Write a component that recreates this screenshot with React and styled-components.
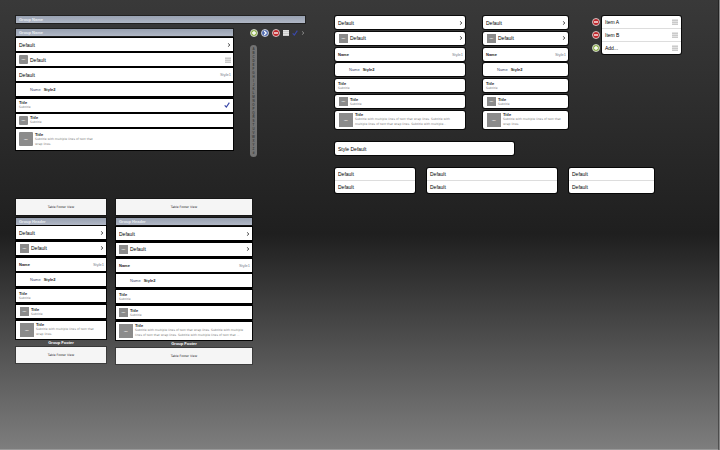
import React from "react";
import styled, { createGlobalStyle } from "styled-components";

const GlobalStyle = createGlobalStyle`
  * { box-sizing: border-box; }
  html { min-height: 100%; background: #7e7e7e; }
  body { margin: 0; font-family: "Liberation Sans", Arial, sans-serif; }
  ul { list-style: none; margin: 0; padding: 0; }
`;

const Page = styled.main`
  min-height: 100vh;
  padding: 16px;
  display: grid;
  grid-template-columns: 303fr 369fr;
  column-gap: 16px;
  align-items: start;
  background: linear-gradient(#393939 0%, #1f1f1f 52%, #7e7e7e 100%);
  border-right: 1px solid #858585;
  box-shadow: inset -1px 0 0 rgba(0, 0, 0, 0.35), inset 0 -1px 0 #999;
  padding-right: 15px;
`;

const PlainSection = styled.section`
  display: flex;
  flex-direction: column;
  padding-right: 14px;
`;

const GroupedSection = styled.section`
  display: flex;
  flex-direction: column;
  gap: 13px;
`;

const PlainBody = styled.div`
  display: grid;
  grid-template-columns: 217fr 55fr;
  column-gap: 17px;
  margin-top: 6px;
  align-items: start;
`;

const Tables = styled.div`
  display: grid;
  grid-template-columns: 90fr 136fr;
  column-gap: 10px;
  margin-top: 42px;
  padding-right: 53px;
`;

const GroupedLists = styled.div`
  display: grid;
  grid-template-columns: 130fr 85fr 118fr;
  column-gap: 18px;
  align-items: start;
`;

const PairLists = styled.div`
  display: grid;
  grid-template-columns: 80fr 130fr 85fr;
  column-gap: 12px;
  padding-right: 50px;
`;

const Column = styled.div`
  display: flex;
  flex-direction: column;
`;

const GroupHeader = styled.h2`
  margin: 0 0 ${(p) => p.$after || 0}px;
  padding-left: 3px;
  font-size: 4px;
  line-height: 7px;
  font-weight: bold;
  color: #eceef2;
  background: linear-gradient(#98a1b1, #b0b7c5);
  box-shadow: 0 0 0 1px rgba(0, 0, 0, 0.4);
`;

const List = styled.ul`
  display: flex;
  flex-direction: column;
  justify-content: space-between;
  min-height: ${(p) => (p.$rounded || p.$table ? 113 : 112)}px;
  background: ${(p) => (p.$rounded ? "none" : "#000")};
  box-shadow: ${(p) => (p.$rounded ? "none" : "0 0 0 1px rgba(0, 0, 0, 0.6)")};
`;

const Row = styled.li`
  display: flex;
  background: #fff;
  min-height: ${(p) => p.$height || 13}px;
  border-radius: ${(p) => (p.$rounded ? 2 : 0)}px;
  box-shadow: 0 0 0 1px rgba(0, 0, 0, 0.8);
`;

const RowBody = styled.div`
  flex: 1;
  min-width: 0;
  display: flex;
  align-items: center;
  gap: ${(p) => p.$gap || 2}px;
  padding: 0 ${(p) => p.$end || 2}px 0 ${(p) => p.$start || 3}px;
  border: 0;
  background: none;
  font-family: inherit;
  text-align: left;
  color: #111;
`;

const Label = styled.span`
  font-size: 5px;
  line-height: 6px;
  color: #000;
  white-space: nowrap;
`;

const SmallLabel = styled.span`
  font-size: 4px;
  line-height: 5px;
  font-weight: ${(p) => (p.$plain ? "normal" : "bold")};
  color: ${(p) => p.$color || "#222"};
  white-space: nowrap;
`;

const Stack = styled.span`
  display: flex;
  flex-direction: column;
  min-width: 0;
`;

const Subtitle = styled.span`
  font-family: "DejaVu Sans", sans-serif;
  font-size: 3px;
  line-height: 5px;
  color: #7c7c7c;
  white-space: nowrap;
`;

const Thumb = styled.span`
  flex: none;
  width: ${(p) => (p.$large ? 14 : 9)}px;
  height: ${(p) => (p.$large ? 14 : 9)}px;
  border-radius: ${(p) => (p.$square ? 0 : 1)}px;
  background: #8b8b8b;
  color: #eee;
  font-size: 2px;
  line-height: ${(p) => (p.$large ? 14 : 9)}px;
  font-weight: bold;
  text-align: center;
`;

const Trailing = styled.span`
  margin-left: auto;
  display: flex;
  align-items: center;
`;

const TableFooterView = styled.div`
  font-family: "DejaVu Sans", sans-serif;
  font-size: 3px;
  line-height: 16px;
  text-align: center;
  color: #222;
  background: #f5f5f5;
  box-shadow: 0 0 0 1px rgba(0, 0, 0, 0.3);
  margin-bottom: ${(p) => p.$after || 0}px;
`;

const GroupFooter = styled.p`
  margin: 0;
  font-size: 4px;
  line-height: 8px;
  font-weight: bold;
  text-align: center;
  color: #fff;
`;

const IconBar = styled.div`
  display: flex;
  align-items: center;
  justify-content: space-between;
  height: 8px;
`;

const IndexBar = styled.nav`
  width: 7px;
  margin-top: 8px;
  padding: 2px 0;
  display: flex;
  flex-direction: column;
  border-radius: 4px;
  background: #737373;
`;

const IndexLink = styled.a`
  font-size: 3px;
  line-height: 4px;
  font-weight: bold;
  text-align: center;
  text-decoration: none;
  color: #3c3c3c;
`;

const IconButton = styled.button`
  display: flex;
  align-items: center;
  justify-content: center;
  padding: 0;
  border: 0;
  background: none;
`;

const Card = styled.ul`
  flex: 1;
  background: #fff;
  border-radius: 2px;
  box-shadow: 0 0 0 1px rgba(0, 0, 0, 0.8);
`;

const CardRow = styled.li`
  display: flex;
  align-items: center;
  min-height: 12px;
  padding: 0 3px;
  & + & { border-top: 1px solid #ddd; min-height: 13px; }
`;

const SingleCard = styled(Card)`
  flex: none;
  width: 48.5%;
  ${CardRow} { min-height: 13px; }
`;

const Editor = styled.div`
  display: flex;
  gap: 2px;
  padding: 0 23px 0 6px;
`;

const EditorButtons = styled.div`
  display: flex;
  flex-direction: column;
  justify-content: space-around;
`;

const Svg = styled.svg`
  display: block;
  flex: none;
`;

const Round = ({ color, children }) => (
  <Svg width="8" height="8" viewBox="0 0 24 24" fill="none">
    <circle cx="12" cy="12" r="10.5" fill={color} stroke="#dcdcdc" strokeWidth="2.6" />
    {children}
  </Svg>
);
const Plus = () => (
  <Round color="#8fb24a">
    <path d="M12 6v12M6 12h12" stroke="#fff" strokeWidth="4" />
  </Round>
);
const Minus = () => (
  <Round color="#bd2429">
    <path d="M6 12h12" stroke="#fff" strokeWidth="4" />
  </Round>
);
const Detail = () => (
  <Round color="#506cb4">
    <path d="M9.5 6l6 6-6 6" stroke="#fff" strokeWidth="3.6" />
  </Round>
);
const Chevron = ({ color = "#222" }) => (
  <Svg width="4" height="6" viewBox="0 0 12 18" fill="none">
    <path d="M4 4l4 5-4 5" stroke={color} strokeWidth="2.6" />
  </Svg>
);
const Grip = () => (
  <Svg width="6" height="6" viewBox="0 0 6 6">
    <path d="M0 0h6v6h-6z" fill="#e2e2e2" />
    <path d="M0 1.5h6M0 3.5h6M0 5.5h6" stroke="#cacaca" strokeWidth="1" />
  </Svg>
);
const Check = () => (
  <Svg width="6" height="6" viewBox="0 0 18 18" fill="none">
    <path d="M2 10l5 5L16 2" stroke="#3a48a8" strokeWidth="3.4" />
  </Svg>
);

const WRAP = ["Subtitle with multiple lines of text that", "wrap lines."];
const WRAP_WIDE = [
  "Subtitle with multiple lines of text that wrap lines. Subtitle with",
  "multiple lines of text that wrap lines. Subtitle with multiple...",
];
const WRAP_TABLE = [
  "Subtitle with multiple lines of text that wrap lines. Subtitle with multiple",
  "lines of text that wrap lines. Subtitle with multiple lines of text that ...",
];

function Titled({ lines }) {
  return (
    <Stack>
      <SmallLabel>Title</SmallLabel>
      {lines.map((line) => (
        <Subtitle key={line}>{line}</Subtitle>
      ))}
    </Stack>
  );
}

function CellList({ rounded, table, plain, lines, inset = 3 }) {
  const tail = plain ? <Grip /> : <Chevron />;
  return (
    <List $rounded={rounded} $table={table}>
      <Row $rounded={rounded}>
        <RowBody as="button" type="button">
          <Label>Default</Label>
          <Trailing><Chevron /></Trailing>
        </RowBody>
      </Row>
      <Row $rounded={rounded}>
        <RowBody as={plain ? "div" : "button"} $start={inset}>
          <Thumb $square={!plain}>IMG</Thumb>
          <Label>Default</Label>
          <Trailing>{tail}</Trailing>
        </RowBody>
      </Row>
      <Row $rounded={rounded}>
        <RowBody>
          {plain ? <Label>Default</Label> : <SmallLabel>Name</SmallLabel>}
          <Trailing>
            <SmallLabel $plain $color="#7b828e">Style1</SmallLabel>
          </Trailing>
        </RowBody>
      </Row>
      <Row $rounded={rounded}>
        <RowBody $start={14} $gap={3}>
          <SmallLabel $plain $color="#3f4f70">Name</SmallLabel>
          <SmallLabel>Style2</SmallLabel>
        </RowBody>
      </Row>
      <Row $rounded={rounded}>
        <RowBody $end={3}>
          <Titled lines={["Subtitle"]} />
          {plain && <Trailing><Check /></Trailing>}
        </RowBody>
      </Row>
      <Row $rounded={rounded}>
        <RowBody $start={inset}>
          <Thumb $square={!plain}>IMG</Thumb>
          <Titled lines={["Subtitle"]} />
        </RowBody>
      </Row>
      <Row $rounded={rounded} $height={plain ? 21 : 18}>
        <RowBody $start={inset}>
          <Thumb $large $square={!plain}>IMG</Thumb>
          <Titled lines={lines} />
        </RowBody>
      </Row>
    </List>
  );
}

function Table({ lines, headerGap, inset }) {
  return (
    <Column>
      <TableFooterView $after={3}>Table Footer View</TableFooterView>
      <GroupHeader $after={headerGap}>Group Header</GroupHeader>
      <CellList table lines={lines} inset={inset} />
      <GroupFooter>Group Footer</GroupFooter>
      <TableFooterView>Table Footer View</TableFooterView>
    </Column>
  );
}

const Pair = () => (
  <Card>
    <CardRow><Label>Default</Label></CardRow>
    <CardRow><Label>Default</Label></CardRow>
  </Card>
);

export default function App() {
  return (
    <>
      <GlobalStyle />
      <Page>
        <PlainSection>
          <GroupHeader>Group Name</GroupHeader>
          <PlainBody>
            <Column>
              <GroupHeader $after={2}>Group Name</GroupHeader>
              <CellList plain lines={WRAP} />
            </Column>
            <Column>
              <IconBar>
                <IconButton aria-label="Add"><Plus /></IconButton>
                <IconButton aria-label="Details"><Detail /></IconButton>
                <IconButton aria-label="Remove"><Minus /></IconButton>
                <IconButton aria-label="Reorder"><Grip /></IconButton>
                <IconButton aria-label="Select"><Check /></IconButton>
                <IconButton aria-label="Open"><Chevron color="#9a9a9a" /></IconButton>
              </IconBar>
              <IndexBar aria-label="Index">
                {"ABCDEFGHIJKLMNOPQRSTUVWXYZ#".split("").map((letter) => (
                  <IndexLink key={letter} href="#">{letter}</IndexLink>
                ))}
              </IndexBar>
            </Column>
          </PlainBody>
          <Tables>
            <Table lines={WRAP} headerGap={1} inset={4} />
            <Table lines={WRAP_TABLE} headerGap={2} inset={3} />
          </Tables>
        </PlainSection>
        <GroupedSection>
          <GroupedLists>
            <CellList rounded lines={WRAP_WIDE} inset={4} />
            <CellList rounded lines={WRAP} inset={4} />
            <Editor>
              <EditorButtons>
                <IconButton aria-label="Remove Item A"><Minus /></IconButton>
                <IconButton aria-label="Remove Item B"><Minus /></IconButton>
                <IconButton aria-label="Add item"><Plus /></IconButton>
              </EditorButtons>
              <Card>
                {["Item A", "Item B", "Add..."].map((item) => (
                  <CardRow key={item}>
                    <Label>{item}</Label>
                    <Trailing><Grip /></Trailing>
                  </CardRow>
                ))}
              </Card>
            </Editor>
          </GroupedLists>
          <SingleCard>
            <CardRow><Label>Style Default</Label></CardRow>
          </SingleCard>
          <PairLists>
            <Pair />
            <Pair />
            <Pair />
          </PairLists>
        </GroupedSection>
      </Page>
    </>
  );
}
